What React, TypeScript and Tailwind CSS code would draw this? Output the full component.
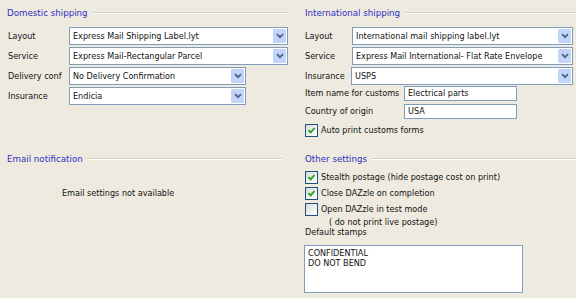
import React from 'react';

const font = "font-['DejaVu_Sans',Verdana,sans-serif]";

function Chevron() {
  return (
    <svg width="8" height="6" viewBox="0 0 8 6">
      <path d="M1 1.2 L4 4.2 L7 1.2" fill="none" stroke="#4D6185" strokeWidth="1.7" />
    </svg>
  );
}

function Select({ value, width }: { value: string; width: string }) {
  return (
    <div className={`flex h-[18px] ${width} border border-[#7F9DB9] bg-white`}>
      <span className="flex-1 truncate pl-[3px] leading-[16px]">{value}</span>
      <span className="m-px flex w-[13px] items-center justify-center rounded-[1px] bg-[#C3D4FA]">
        <Chevron />
      </span>
    </div>
  );
}

function GroupTitle({ title }: { title: string }) {
  return (
    <div className="flex h-[12px] items-center gap-[4px]">
      <span className="text-[8.7px] leading-[12px] text-[#2F2FC0]">{title}</span>
      <div className="h-0 flex-1 border-t border-b border-t-[#D3D0C2] border-b-white" />
    </div>
  );
}

function Check({ checked, label }: { checked: boolean; label: string }) {
  return (
    <div className="flex h-[16px] items-center gap-[2px]">
      <span className="flex h-[13px] w-[13px] items-center justify-center border border-[#1C5180] bg-gradient-to-br from-[#DCDCD7] to-white">
        {checked && (
          <svg width="9" height="9" viewBox="0 0 9 9">
            <path d="M1.5 4.2 L3.6 6.4 L7.6 2" fill="none" stroke="#21A121" strokeWidth="1.8" />
          </svg>
        )}
      </span>
      <span className="pl-px">{label}</span>
    </div>
  );
}

export default function App() {
  return (
    <div className={`h-[298px] w-[576px] overflow-hidden bg-[#EEEAE0] text-[8.1px] text-[#111] ${font}`}>
      <div className="grid grid-cols-[300px_276px]">
        {/* left column */}
        <div className="pl-[7px] pr-[12px] pt-[7px]">
          <GroupTitle title="Domestic shipping" />
          <div className="mt-[8px] flex flex-col gap-[2px]">
            <div className="flex items-center">
              <span className="w-[62px] pl-px">Layout</span>
              <Select value="Express Mail Shipping Label.lyt" width="w-[219px]" />
            </div>
            <div className="flex items-center">
              <span className="w-[62px] pl-px">Service</span>
              <Select value="Express Mail-Rectangular Parcel" width="w-[219px]" />
            </div>
            <div className="flex items-center">
              <span className="w-[62px] pl-px">Delivery conf</span>
              <Select value="No Delivery Confirmation" width="w-[177px]" />
            </div>
            <div className="flex items-center">
              <span className="w-[62px] pl-px">Insurance</span>
              <Select value="Endicia" width="w-[177px]" />
            </div>
          </div>

          <div className="mt-[48px] pr-[6px]">
            <GroupTitle title="Email notification" />
          </div>
          <div className="mt-[22px] pl-[55px] leading-[12px]">Email settings not available</div>
        </div>

        {/* right column */}
        <div className="pl-[5px] pt-[7px]">
          <GroupTitle title="International shipping" />
          <div className="mt-[8px] flex flex-col gap-[2px] pr-[3px]">
            <div className="flex items-center">
              <span className="w-[47px]">Layout</span>
              <Select value="International mail shipping label.lyt" width="w-[221px]" />
            </div>
            <div className="flex items-center">
              <span className="w-[47px]">Service</span>
              <Select value="Express Mail International- Flat Rate Envelope" width="w-[221px]" />
            </div>
            <div className="flex items-center">
              <span className="w-[46px]">Insurance</span>
              <Select value="USPS" width="w-[222px]" />
            </div>
          </div>
          <div className="mt-px flex flex-col gap-[3px]">
            <div className="flex items-center">
              <span className="w-[99px]">Item name for customs</span>
              <div className="h-[15px] w-[113px] border border-[#7F9DB9] bg-white pl-[3px] leading-[13px]">Electrical parts</div>
            </div>
            <div className="flex items-center">
              <span className="w-[99px]">Country of origin</span>
              <div className="h-[15px] w-[113px] border border-[#7F9DB9] bg-white pl-[3px] leading-[13px]">USA</div>
            </div>
          </div>
          <div className="mt-[3px]">
            <Check checked label="Auto print customs forms" />
          </div>

          <div className="mt-[15px]">
            <GroupTitle title="Other settings" />
          </div>
          <div className="mt-[4px] flex flex-col">
            <Check checked label="Stealth postage (hide postage cost on print)" />
            <Check checked label="Close DAZzle on completion" />
            <Check checked={false} label="Open DAZzle in test mode" />
          </div>
          <div className="pl-[24px] leading-[10px]">( do not print live postage)</div>
          <div className="leading-[10px]">Default stamps</div>
          <div className="mt-[8px] h-[48px] w-[219px] -translate-x-px border border-[#7F9DB9] bg-white pl-[3px] pt-[2px] leading-[10px]">
            <div>CONFIDENTIAL</div>
            <div>DO NOT BEND</div>
          </div>
        </div>
      </div>
    </div>
  );
}
